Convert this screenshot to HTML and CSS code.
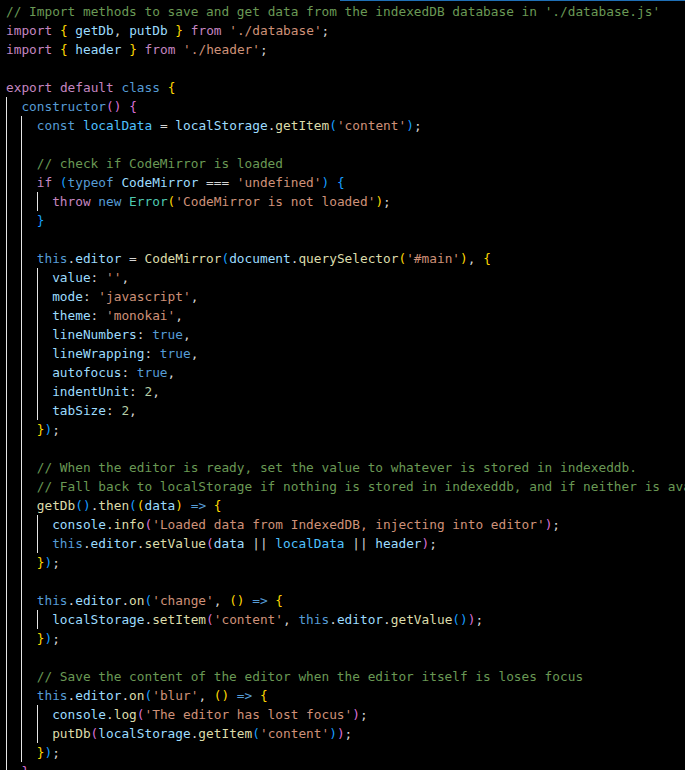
FILE: index.html
```html
<!DOCTYPE html>
<html>
<head>
<meta charset="utf-8">
<link rel="stylesheet" href="styles.css">
</head>
<body>
<div class="topline"></div>
<div class="code">
<div class="ln"><span class="c">// Import methods to save and get data from the indexedDB database in './database.js'</span></div>
<div class="ln"><span class="k">import</span> <span class="b1">{</span> <span class="v">getDb</span>, <span class="v">putDb</span> <span class="b1">}</span> <span class="k">from</span> <span class="str">'./database'</span>;</div>
<div class="ln"><span class="k">import</span> <span class="b1">{</span> <span class="v">header</span> <span class="b1">}</span> <span class="k">from</span> <span class="str">'./header'</span>;</div>
<div class="ln"></div>
<div class="ln"><span class="k">export</span> <span class="k">default</span> <span class="s">class</span> <span class="b1">{</span></div>
<div class="ln"><span class="g"></span><span class="s">constructor</span><span class="b2">()</span> <span class="b2">{</span></div>
<div class="ln"><span class="g"></span><span class="g"></span><span class="s">const</span> <span class="cv">localData</span> = <span class="v">localStorage</span>.<span class="f">getItem</span><span class="b3">(</span><span class="str">'content'</span><span class="b3">)</span>;</div>
<div class="ln"><span class="g"></span><span class="g"></span></div>
<div class="ln"><span class="g"></span><span class="g"></span><span class="c">// check if CodeMirror is loaded</span></div>
<div class="ln"><span class="g"></span><span class="g"></span><span class="k">if</span> <span class="b3">(</span><span class="s">typeof</span> <span class="v">CodeMirror</span> === <span class="str">'undefined'</span><span class="b3">)</span> <span class="b3">{</span></div>
<div class="ln"><span class="g"></span><span class="g"></span><span class="g"></span><span class="k">throw</span> <span class="s">new</span> <span class="t">Error</span><span class="b1">(</span><span class="str">'CodeMirror is not loaded'</span><span class="b1">)</span>;</div>
<div class="ln"><span class="g"></span><span class="g"></span><span class="b3">}</span></div>
<div class="ln"><span class="g"></span><span class="g"></span></div>
<div class="ln"><span class="g"></span><span class="g"></span><span class="s">this</span>.<span class="v">editor</span> = <span class="f">CodeMirror</span><span class="b3">(</span><span class="v">document</span>.<span class="f">querySelector</span><span class="b1">(</span><span class="str">'#main'</span><span class="b1">)</span>, <span class="b1">{</span></div>
<div class="ln"><span class="g"></span><span class="g"></span><span class="g"></span><span class="v">value</span>: <span class="str">''</span>,</div>
<div class="ln"><span class="g"></span><span class="g"></span><span class="g"></span><span class="v">mode</span>: <span class="str">'javascript'</span>,</div>
<div class="ln"><span class="g"></span><span class="g"></span><span class="g"></span><span class="v">theme</span>: <span class="str">'monokai'</span>,</div>
<div class="ln"><span class="g"></span><span class="g"></span><span class="g"></span><span class="v">lineNumbers</span>: <span class="s">true</span>,</div>
<div class="ln"><span class="g"></span><span class="g"></span><span class="g"></span><span class="v">lineWrapping</span>: <span class="s">true</span>,</div>
<div class="ln"><span class="g"></span><span class="g"></span><span class="g"></span><span class="v">autofocus</span>: <span class="s">true</span>,</div>
<div class="ln"><span class="g"></span><span class="g"></span><span class="g"></span><span class="v">indentUnit</span>: <span class="n">2</span>,</div>
<div class="ln"><span class="g"></span><span class="g"></span><span class="g"></span><span class="v">tabSize</span>: <span class="n">2</span>,</div>
<div class="ln"><span class="g"></span><span class="g"></span><span class="b1">}</span><span class="b3">)</span>;</div>
<div class="ln"><span class="g"></span><span class="g"></span></div>
<div class="ln"><span class="g"></span><span class="g"></span><span class="c">// When the editor is ready, set the value to whatever is stored in indexeddb.</span></div>
<div class="ln"><span class="g"></span><span class="g"></span><span class="c">// Fall back to localStorage if nothing is stored in indexeddb, and if neither is available, set the value to header.</span></div>
<div class="ln"><span class="g"></span><span class="g"></span><span class="f">getDb</span><span class="b3">()</span>.<span class="f">then</span><span class="b3">(</span><span class="b1">(</span><span class="v">data</span><span class="b1">)</span> <span class="s">=&gt;</span> <span class="b1">{</span></div>
<div class="ln"><span class="g"></span><span class="g"></span><span class="g"></span><span class="v">console</span>.<span class="f">info</span><span class="b2">(</span><span class="str">'Loaded data from IndexedDB, injecting into editor'</span><span class="b2">)</span>;</div>
<div class="ln"><span class="g"></span><span class="g"></span><span class="g"></span><span class="s">this</span>.<span class="v">editor</span>.<span class="f">setValue</span><span class="b2">(</span><span class="v">data</span> || <span class="cv">localData</span> || <span class="v">header</span><span class="b2">)</span>;</div>
<div class="ln"><span class="g"></span><span class="g"></span><span class="b1">}</span><span class="b3">)</span>;</div>
<div class="ln"><span class="g"></span><span class="g"></span></div>
<div class="ln"><span class="g"></span><span class="g"></span><span class="s">this</span>.<span class="v">editor</span>.<span class="f">on</span><span class="b3">(</span><span class="str">'change'</span>, <span class="b1">()</span> <span class="s">=&gt;</span> <span class="b1">{</span></div>
<div class="ln"><span class="g"></span><span class="g"></span><span class="g"></span><span class="v">localStorage</span>.<span class="f">setItem</span><span class="b2">(</span><span class="str">'content'</span>, <span class="s">this</span>.<span class="v">editor</span>.<span class="f">getValue</span><span class="b3">()</span><span class="b2">)</span>;</div>
<div class="ln"><span class="g"></span><span class="g"></span><span class="b1">}</span><span class="b3">)</span>;</div>
<div class="ln"><span class="g"></span><span class="g"></span></div>
<div class="ln"><span class="g"></span><span class="g"></span><span class="c">// Save the content of the editor when the editor itself is loses focus</span></div>
<div class="ln"><span class="g"></span><span class="g"></span><span class="s">this</span>.<span class="v">editor</span>.<span class="f">on</span><span class="b3">(</span><span class="str">'blur'</span>, <span class="b1">()</span> <span class="s">=&gt;</span> <span class="b1">{</span></div>
<div class="ln"><span class="g"></span><span class="g"></span><span class="g"></span><span class="v">console</span>.<span class="f">log</span><span class="b2">(</span><span class="str">'The editor has lost focus'</span><span class="b2">)</span>;</div>
<div class="ln"><span class="g"></span><span class="g"></span><span class="g"></span><span class="f">putDb</span><span class="b2">(</span><span class="v">localStorage</span>.<span class="f">getItem</span><span class="b3">(</span><span class="str">'content'</span><span class="b3">)</span><span class="b2">)</span>;</div>
<div class="ln"><span class="g"></span><span class="g"></span><span class="b1">}</span><span class="b3">)</span>;</div>
<div class="ln"><span class="g"></span><span class="b2">}</span></div>
</div>
</body>
</html>
```
FILE: styles.css
```css
html, body {
  margin: 0;
  padding: 0;
  background: #000;
  overflow: hidden;
  height: 770px;
}
.topline {
  height: 1px;
  margin-left: 340px;
  background: #1f6fb5;
}
.code {
  padding: 1px 0 0 6px;
  font-family: "DejaVu Sans Mono", "Liberation Mono", monospace;
  font-size: 12.79px;
  color: #d4d4d4;
}
.ln {
  height: 19px;
  line-height: 19px;
  white-space: pre;
}
.g {
  display: inline-block;
  width: 2ch;
  height: 19px;
  vertical-align: top;
  box-shadow: inset 1px 0 0 #e6e6e6;
}
.c { color: #6a9955; }
.k { color: #c586c0; }
.s { color: #569cd6; }
.v { color: #9cdcfe; }
.cv { color: #4fc1ff; }
.f { color: #dcdcaa; }
.t { color: #4ec9b0; }
.str { color: #ce9178; }
.n { color: #b5cea8; }
.b1 { color: #ffd700; }
.b2 { color: #da70d6; }
.b3 { color: #179fff; }
```
